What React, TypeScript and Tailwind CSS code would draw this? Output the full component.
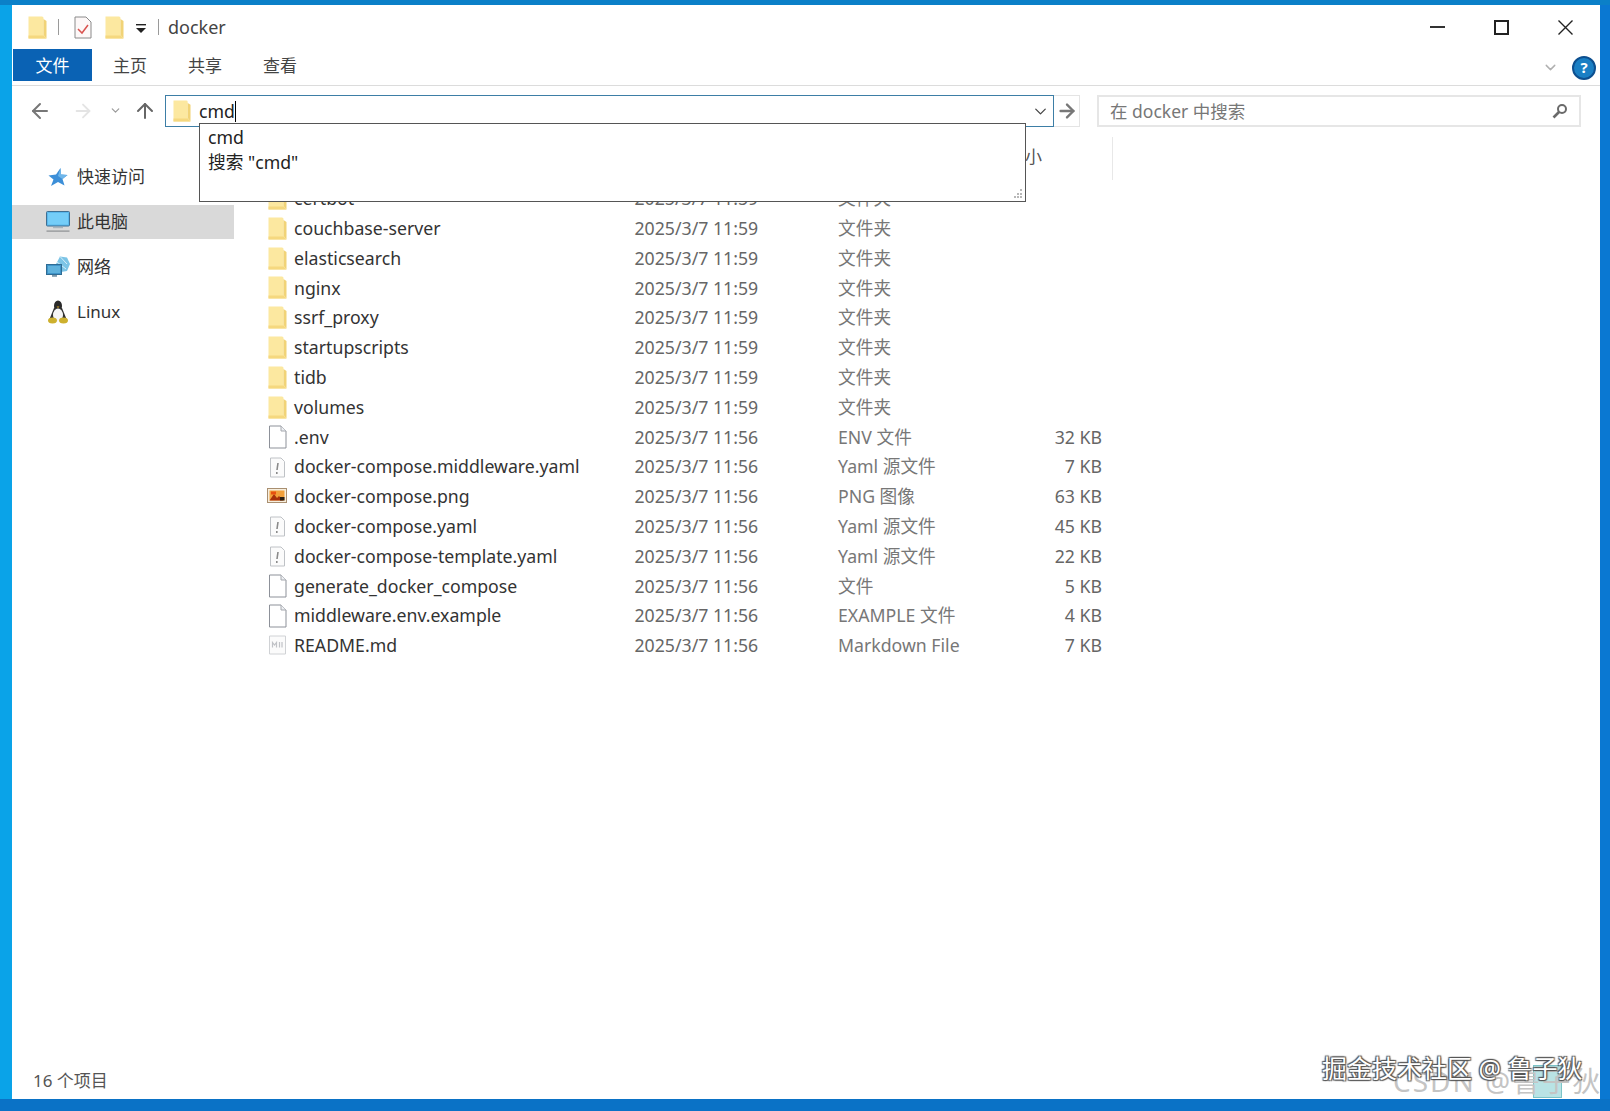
// App.tsx
import { ArrowLeft, ArrowRight, ArrowUp, ChevronDown } from 'lucide-react';

type Row = { name: string; date: string; type: string; size?: string; icon: 'folder' | 'file' | 'yaml' | 'png' | 'md' };

const rows: Row[] = [
  { name: 'certbot', date: '2025/3/7 11:59', type: '文件夹', icon: 'folder' },
  { name: 'couchbase-server', date: '2025/3/7 11:59', type: '文件夹', icon: 'folder' },
  { name: 'elasticsearch', date: '2025/3/7 11:59', type: '文件夹', icon: 'folder' },
  { name: 'nginx', date: '2025/3/7 11:59', type: '文件夹', icon: 'folder' },
  { name: 'ssrf_proxy', date: '2025/3/7 11:59', type: '文件夹', icon: 'folder' },
  { name: 'startupscripts', date: '2025/3/7 11:59', type: '文件夹', icon: 'folder' },
  { name: 'tidb', date: '2025/3/7 11:59', type: '文件夹', icon: 'folder' },
  { name: 'volumes', date: '2025/3/7 11:59', type: '文件夹', icon: 'folder' },
  { name: '.env', date: '2025/3/7 11:56', type: 'ENV 文件', size: '32 KB', icon: 'file' },
  { name: 'docker-compose.middleware.yaml', date: '2025/3/7 11:56', type: 'Yaml 源文件', size: '7 KB', icon: 'yaml' },
  { name: 'docker-compose.png', date: '2025/3/7 11:56', type: 'PNG 图像', size: '63 KB', icon: 'png' },
  { name: 'docker-compose.yaml', date: '2025/3/7 11:56', type: 'Yaml 源文件', size: '45 KB', icon: 'yaml' },
  { name: 'docker-compose-template.yaml', date: '2025/3/7 11:56', type: 'Yaml 源文件', size: '22 KB', icon: 'yaml' },
  { name: 'generate_docker_compose', date: '2025/3/7 11:56', type: '文件', size: '5 KB', icon: 'file' },
  { name: 'middleware.env.example', date: '2025/3/7 11:56', type: 'EXAMPLE 文件', size: '4 KB', icon: 'file' },
  { name: 'README.md', date: '2025/3/7 11:56', type: 'Markdown File', size: '7 KB', icon: 'md' },
];

function FolderIcon({ className = 'w-[19px] h-[23px]' }: { className?: string }) {
  return (
    <svg viewBox="0 0 19 23" className={className}>
      <path d="M0.5 0.5 H14 Q15.5 0.5 15.5 2 V19 L18.5 22.5 H0.5 Z" fill="#fce8a0" />
      <path d="M15.5 3 L18.5 5 V22.5 L15.5 19 Z" fill="#f1d377" />
      <path d="M0.5 19.5 H15.5 L18.5 22.5 H0.5 Z" fill="#f5d87f" />
    </svg>
  );
}

function FileIcon() {
  return (
    <svg viewBox="0 0 19 24" className="w-[19px] h-[24px]">
      <path d="M1.5 1 H13 L18 6 V23 H1.5 Z" fill="#fff" stroke="#8d9199" strokeWidth="1" />
      <path d="M13 1 V6 H18" fill="#eef0f3" stroke="#a5a8ae" strokeWidth="1" />
    </svg>
  );
}

function YamlIcon() {
  return (
    <svg viewBox="0 0 19 24" className="w-[19px] h-[24px]">
      <path d="M2.5 3 H13 L16.5 6.5 V22 H2.5 Z" fill="#fbfbfb" stroke="#bfc2c6" strokeWidth="1" />
      <path d="M10 8 L9 15" stroke="#8a8a8a" strokeWidth="1.6" />
      <path d="M8.8 17 V19" stroke="#8a8a8a" strokeWidth="1.6" />
    </svg>
  );
}

function PngIcon() {
  return (
    <svg viewBox="0 0 20 18" className="w-[20px] h-[18px]">
      <rect x="0.5" y="1.5" width="19" height="14" fill="#f7efdf" stroke="#a98f70" />
      <rect x="2.5" y="3.5" width="15" height="10" fill="#f2a03a" />
      <path d="M2.5 13.5 L7 7 L10 11 L12 9 L16 13.5 Z" fill="#a8300a" />
      <rect x="4" y="4.5" width="5" height="3" fill="#e8500f" />
      <rect x="13" y="10" width="4.5" height="3.5" fill="#2a1f14" />
    </svg>
  );
}

function MdIcon() {
  return (
    <svg viewBox="0 0 19 24" className="w-[19px] h-[24px]">
      <path d="M1.5 3 H17.5 V21 H1.5 Z" fill="#fbfbfb" stroke="#d0d2d5" strokeWidth="1" />
      <path d="M4.5 14.5 V9.5 L6.5 12 L8.5 9.5 V14.5 M11.5 9 V14.5 M14 9 V14.5" fill="none" stroke="#c0c2c6" strokeWidth="1.2" />
    </svg>
  );
}

function RowIcon({ kind }: { kind: Row['icon'] }) {
  if (kind === 'folder') return <FolderIcon />;
  if (kind === 'yaml') return <YamlIcon />;
  if (kind === 'png') return <PngIcon />;
  if (kind === 'md') return <MdIcon />;
  return <FileIcon />;
}

function PcIcon() {
  return (
    <svg viewBox="0 0 24 22" className="w-[24px] h-[22px]">
      <rect x="0.5" y="0.5" width="23" height="14.5" rx="1" fill="#5ab8ec" stroke="#3f6f92" />
      <rect x="2" y="2" width="20" height="11.5" fill="#74cdf8" />
      <rect x="7" y="16" width="10" height="1.2" fill="#a8b4bc" />
      <rect x="0.5" y="19.5" width="23" height="1.2" fill="#8c8f92" />
    </svg>
  );
}

function NetIcon() {
  return (
    <svg viewBox="0 0 24 24" className="w-[24px] h-[24px]">
      <path d="M10 9 L14 1.5 L21 2.5 L24 9 L21 16 L15 17 Z" fill="#7cc4e6" />
      <path d="M14 1.5 L21 9 M11 7 L20 14" stroke="#d4eefa" strokeWidth="1" />
      <rect x="0.5" y="9.5" width="15" height="10" fill="#3f94c8" stroke="#2f6c94" />
      <rect x="2" y="11" width="12" height="7" fill="#5fb2dd" />
      <rect x="6" y="20" width="5" height="1.8" fill="#7b98ab" />
    </svg>
  );
}

function StarIcon() {
  return (
    <svg viewBox="0 0 20 20" className="w-[20px] h-[20px]">
      <path d="M12.5 1 L13 7.5 L19.5 8 L14.5 12 L16.5 18.5 L10 15 L3 19 L5.5 12.5 L0.5 8.5 L8 7.5 Z" fill="#3c8fd8" />
      <path d="M12.5 1 L13 7.5 L19.5 8 L14.5 12 L10 9 Z" fill="#6fb6ea" />
    </svg>
  );
}

function TuxIcon() {
  return (
    <svg viewBox="0 0 20 24" className="w-[20px] h-[24px]">
      <ellipse cx="10" cy="6" rx="4" ry="5.5" fill="#2a2a2a" />
      <path d="M6 8 L1.5 19 H18.5 L14 8 Z" fill="#333" />
      <ellipse cx="10" cy="15" rx="5" ry="6.5" fill="#f5f5f5" />
      <ellipse cx="4.5" cy="20.5" rx="4.5" ry="3" fill="#cdb02e" />
      <ellipse cx="15.5" cy="20.5" rx="4.5" ry="3" fill="#cdb02e" />
      <path d="M8.5 6.5 H11.5 L10 8 Z" fill="#d9a520" />
    </svg>
  );
}

function NavItem({ icon, label, active }: { icon: React.ReactNode; label: string; active?: boolean }) {
  return (
    <div className={`h-[34px] flex items-center pl-[34px] ${active ? 'bg-[#d9d9d9]' : ''}`}>
      <div className="w-[24px] flex justify-center">{icon}</div>
      <span className="ml-[7px] text-[17px] text-[#333]">{label}</span>
    </div>
  );
}

export default function App() {
  return (
    <div className="relative w-[1610px] h-[1111px] overflow-hidden pt-[5px] pl-[12px] pr-[10px] pb-[12px] bg-[linear-gradient(180deg,#0b80c8_0px,#0b80c8_5px,transparent_5px,transparent_1099px,#0a72c6_1099px),linear-gradient(90deg,#0aa3e8_0px,#0aa3e8_1560px,#0a78d2_1600px)] font-['Noto_Sans','Noto_Sans_CJK_SC',sans-serif]">
      <div className="w-full h-full bg-white flex flex-col">
        {/* title bar */}
        <div className="h-[44px] flex items-center pl-[16px] shrink-0">
          <FolderIcon className="w-[19px] h-[23px]" />
          <div className="w-px h-[16px] bg-[#9a9a9a] ml-[11px]" />
          <svg viewBox="0 0 18 23" className="w-[18px] h-[23px] ml-[15px]">
            <path d="M1 1 H12 L17 6 V22 H1 Z" fill="#fdf8f8" stroke="#8a8a8a" />
            <path d="M4 13 L8 17 L14 9" fill="none" stroke="#d9534f" strokeWidth="1.5" />
          </svg>
          <FolderIcon className="w-[19px] h-[23px] ml-[13px]" />
          <svg viewBox="0 0 10 10" className="w-[10px] h-[10px] ml-[12px] mt-[3px]">
            <rect x="0" y="0" width="10" height="1.4" fill="#222" />
            <path d="M0 4 H10 L5 9 Z" fill="#222" />
          </svg>
          <div className="w-px h-[16px] bg-[#9a9a9a] ml-[12px]" />
          <span className="ml-[9px] text-[18px] text-[#444]">docker</span>
          <div className="ml-auto flex items-center pr-[27px] text-[#222]">
            <div className="w-[15px] h-[2px] bg-[#333]" />
            <div className="ml-[49px] w-[15px] h-[15px] border-2 border-[#222]" />
            <svg viewBox="0 0 15 15" className="ml-[49px] w-[15px] h-[15px]" stroke="#222" strokeWidth="1.4">
              <path d="M0.5 0.5 L14.5 14.5 M14.5 0.5 L0.5 14.5" />
            </svg>
          </div>
        </div>

        {/* ribbon tabs */}
        <div className="h-[37px] flex items-start border-b border-[#dcdcdc] shrink-0 relative">
          <div className="ml-px w-[79px] h-[32px] pt-[2px] bg-[#0a62b4] text-white text-[17px] flex items-center justify-center">文件</div>
          <div className="ml-[21px] w-[34px] h-[32px] pt-[2px] flex items-center justify-center text-[17px] text-[#444]">主页</div>
          <div className="ml-[41px] w-[34px] h-[32px] pt-[2px] flex items-center justify-center text-[17px] text-[#444]">共享</div>
          <div className="ml-[41px] w-[34px] h-[32px] pt-[2px] flex items-center justify-center text-[17px] text-[#444]">查看</div>
          <div className="ml-auto flex items-center h-[36px] pt-[1px] pr-[4px]">
            <ChevronDown size={17} className="text-[#b0b0b0]" />
            <div className="ml-[13px] w-[24px] h-[24px] rounded-full border-2 border-[#0d4f8f] bg-[#1a7fc4] text-white text-[15px] font-bold flex items-center justify-center">?</div>
          </div>
        </div>

        {/* address row */}
        <div className="flex items-start pt-[9px] shrink-0 h-[44px]">
          <div className="w-[153px] h-[31px] flex items-center pl-[16px] text-[#777]">
            <ArrowLeft size={24} strokeWidth={2} />
            <ArrowRight size={22} strokeWidth={2} className="ml-[20px] text-[#e4e4e4]" />
            <ChevronDown size={13} strokeWidth={2.2} className="ml-[15px] text-[#9a9a9a]" />
            <ArrowUp size={24} strokeWidth={2} className="ml-[11px] text-[#666]" />
          </div>
          <div className="w-[889px] h-[32px] border border-[#3d7ea6] flex items-center pl-[7px]">
            <FolderIcon className="w-[18px] h-[22px]" />
            <span className="ml-[8px] text-[17.7px] text-[#222]">cmd</span>
            <div className="w-px h-[21px] bg-black" />
            <ChevronDown size={19} strokeWidth={1.6} className="ml-auto mr-[3px] text-[#444]" />
          </div>
          <div className="w-[26px] h-[32px] border border-l-0 border-[#e4e4e4] flex items-center justify-center text-[#777]">
            <ArrowRight size={22} strokeWidth={2.6} />
          </div>
          <div className="ml-[17px] w-[484px] h-[32px] border-2 border-[#e6e6e6] flex items-center pl-[11px] pr-[11px]">
            <span className="text-[17.5px] text-[#777]">在 docker 中搜索</span>
            <svg viewBox="0 0 16 16" className="ml-auto w-[16px] h-[16px]" fill="none" stroke="#6a6a6a">
              <circle cx="10" cy="6" r="4" strokeWidth="2" />
              <path d="M7 9 L1.5 14.5" strokeWidth="2.6" />
            </svg>
          </div>
        </div>

        {/* body */}
        <div className="flex-1 flex min-h-0">
          <div className="w-[222px] shrink-0 pt-[30px] flex flex-col gap-[11px]">
            <NavItem icon={<StarIcon />} label="快速访问" />
            <NavItem icon={<PcIcon />} label="此电脑" active />
            <NavItem icon={<NetIcon />} label="网络" />
            <NavItem icon={<TuxIcon />} label="Linux" />
          </div>

          <div className="flex-1 flex flex-col min-w-0">
            {/* column header */}
            <div className="h-[53.6px] grid grid-cols-[400.5px_203.5px_204px_60px] items-center text-[17px] text-[#555] relative shrink-0">
              <span className="pl-[60px]">名称</span>
              <span>修改日期</span>
              <span>类型</span>
              <span className="-ml-[34px]">大小</span>
              <div className="absolute left-[878px] top-[7px] h-[43px] w-px bg-[#e8e8e8]" />
            </div>
            {rows.map((r) => (
              <div key={r.name} className="h-[29.8px] grid grid-cols-[400.5px_203.5px_204px_60px] items-center shrink-0">
                <div className="flex items-center pl-[33px]">
                  <div className="w-[20px] flex justify-center"><RowIcon kind={r.icon} /></div>
                  <span className="ml-[7px] text-[17.7px] text-[#333] whitespace-nowrap">{r.name}</span>
                </div>
                <span className="text-[17.7px] text-[#666]">{r.date}</span>
                <span className="text-[17.7px] text-[#777] whitespace-nowrap">{r.type}</span>
                <span className="text-[17.7px] text-[#666] text-right whitespace-nowrap">{r.size}</span>
              </div>
            ))}
            <div className="flex-1" />
          </div>
        </div>

        {/* status bar */}
        <div className="h-[34px] pl-[21px] pt-[3px] flex items-start shrink-0 text-[17px] text-[#555]">16 个项目</div>
      </div>

      {/* address autocomplete */}
      <div className="absolute left-[199px] top-[123px] w-[827px] h-[79px] bg-white border border-[#555] pl-[8px] pt-[1px] text-[17.7px] text-[#222] leading-[25px]">
        <div>cmd</div>
        <div>搜索 "cmd"</div>
        <svg viewBox="0 0 10 10" className="absolute right-[2px] bottom-[2px] w-[10px] h-[10px]" fill="#b8b8b8">
          <rect x="7" y="0" width="2" height="2" />
          <rect x="4" y="4" width="2" height="2" />
          <rect x="7" y="4" width="2" height="2" />
          <rect x="1" y="7" width="2" height="2" />
          <rect x="4" y="7" width="2" height="2" />
          <rect x="7" y="7" width="2" height="2" />
        </svg>
      </div>

      {/* watermarks */}
      <div className="absolute left-[1533px] top-[1065px] w-[29px] h-[33px] bg-[#a8dcdf]/80 border border-[#7cc4c8]" />
      <div className="absolute left-[1393px] top-[1060px] text-[28px] tracking-[2px] text-[#c4c4c4] whitespace-nowrap">CSDN @鲁子狄</div>
      <div className="absolute left-[1322px] top-[1050px] text-[25px] text-white whitespace-nowrap [text-shadow:1px_1px_1px_#555,-1px_-1px_1px_#555,1px_-1px_1px_#555,-1px_1px_1px_#555]">掘金技术社区 @ 鲁子狄</div>
    </div>
  );
}
